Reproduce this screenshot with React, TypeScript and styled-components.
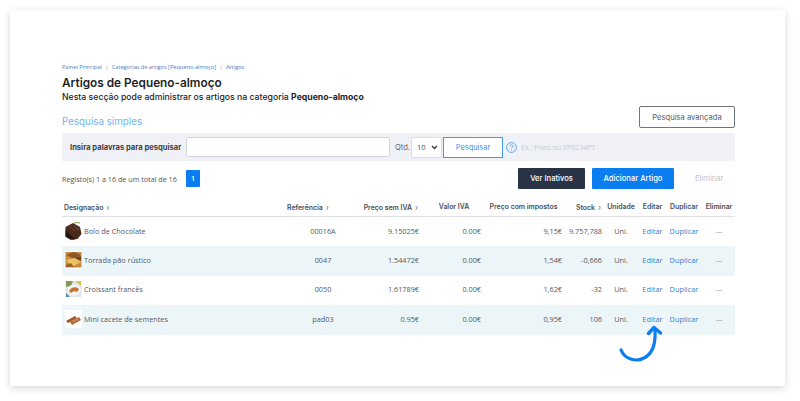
import React from "react";
import styled, { createGlobalStyle } from "styled-components";

const Global = createGlobalStyle`
  html, body { margin: 0; padding: 0; background: #fff; }
  body { width: 800px; height: 401px; overflow: hidden; font-family: "Open Sans", "Liberation Sans", sans-serif; }
  * { box-sizing: border-box; }
`;

const Page = styled.div`
  width: 800px;
  height: 401px;
  padding: 10px 15px 15px 10px;
`;
const Card = styled.main`
  position: relative;
  height: 376px;
  background: #fff;
  box-shadow: 0 2px 7px rgba(60, 64, 100, 0.22);
  padding: 52px 50px 0 52px;
`;
const Crumbs = styled.nav`
  display: flex;
  align-items: center;
  gap: 3.5px;
  height: 9px;
  font-size: 5.7px;
  color: #4a80c0;
  letter-spacing: -0.05px;
  white-space: nowrap;
  span { color: #9aa3b0; }
`;
const Title = styled.h1`
  margin: 5px 0 0;
  font: 600 11.8px/15px Inter, "Open Sans", sans-serif;
  color: #1d1f24;
`;
const Subtitle = styled.p`
  margin: 0;
  font: 500 8.7px/12px Inter, "Open Sans", sans-serif;
  color: #23252a;
  white-space: nowrap;
  b { font-weight: 700; }
`;
const SearchHead = styled.div`
  display: flex;
  justify-content: space-between;
  align-items: flex-end;
  margin-top: 3px;
`;
const SearchTitle = styled.h2`
  margin: 0;
  padding-top: 2px;
  font: 400 9.8px/13px Inter, "Open Sans", sans-serif;
  color: #74b3f3;
`;
const OutlineButton = styled.button`
  width: 96px;
  height: 22px;
  background: #fff;
  border: 1px solid #6f7680;
  border-radius: 2px;
  font: 400 7.6px Inter, sans-serif;
  color: #555b66;
  padding: 0;
`;
const SearchBar = styled.form`
  display: flex;
  align-items: center;
  height: 28px;
  margin-top: 5px;
  padding-left: 8px;
  background: #f0f1f7;
`;
const SearchLabel = styled.label`
  width: 116px;
  font: 700 7.6px Inter, sans-serif;
  color: #3c3f47;
  white-space: nowrap;
`;
const TextInput = styled.div`
  width: 204px;
  height: 20px;
  background: #fff;
  border: 1px solid #d5d7dc;
  border-radius: 2px;
`;
const Qty = styled.span`
  margin-left: 5px;
  width: 16px;
  font: 400 7.6px Inter, sans-serif;
  color: #666;
`;
const SelectBox = styled.div`
  display: flex;
  align-items: center;
  justify-content: space-between;
  width: 31px;
  height: 21px;
  padding: 0 3px 0 5px;
  background: #fff;
  border: 1px solid #dcdde2;
  border-radius: 2px;
  font-size: 7.5px;
  color: #555;
`;
const SearchButton = styled.button`
  width: 60px;
  height: 21px;
  margin-left: 1px;
  padding: 0;
  background: #fff;
  border: 1px solid #3d9bf5;
  font: 400 7.4px Inter, sans-serif;
  color: #3d8ff0;
`;
const Hint = styled.span`
  display: flex;
  align-items: center;
  gap: 4px;
  margin-left: 3px;
  font-size: 7px;
  color: #c6c9d0;
`;
const Actions = styled.div`
  display: flex;
  align-items: center;
  height: 21px;
  margin-top: 7px;
`;
const Records = styled.span`
  width: 124px;
  font-size: 7.2px;
  color: #555;
  white-space: nowrap;
`;
const PageNumber = styled.span`
  display: flex;
  align-items: center;
  justify-content: center;
  width: 14px;
  height: 17px;
  background: #0a7df0;
  border-radius: 1px;
  color: #fff;
  font-size: 7px;
  font-weight: 600;
`;
const Filled = styled.button<{ $bg: string; $w: number; $ml: number }>`
  width: ${(p) => p.$w}px;
  height: 21px;
  margin-left: ${(p) => p.$ml}px;
  padding: 0;
  background: ${(p) => p.$bg};
  border: 0;
  border-radius: 1px;
  font: 500 7.6px Inter, sans-serif;
  color: #fff;
`;
const Ghost = styled.span`
  margin-left: 21px;
  font: 400 7.6px Inter, sans-serif;
  color: #c0c4cc;
`;

const COLS = "220px 63px 78px 62px 81px 40px 30px 33px 30px 36px";
const Table = styled.section`
  margin-top: 10px;
`;
const HeaderRow = styled.div`
  display: grid;
  grid-template-columns: ${COLS};
  align-items: center;
  height: 18px;
  padding-bottom: 2px;
  border-bottom: 1px solid #dfe0e3;
  font: 600 6.9px Inter, sans-serif;
  color: #4a4e57;
  white-space: nowrap;
`;
const Chevron = styled.span`
  margin-left: 3px;
  font-weight: 400;
  font-size: 8px;
  color: #6a6e76;
`;
const Row = styled.div<{ $alt: boolean }>`
  display: grid;
  grid-template-columns: ${COLS};
  align-items: center;
  height: 29.4px;
  padding-bottom: 2px;
  background: ${(p) => (p.$alt ? "#ecf5f8" : "#fff")};
  font-size: 7.3px;
  color: #565a62;
  white-space: nowrap;
`;
const Cell = styled.div<{ $align?: string; $pr?: number; $pl?: number }>`
  text-align: ${(p) => p.$align || "left"};
  padding-right: ${(p) => p.$pr || 0}px;
  padding-left: ${(p) => p.$pl || 0}px;
`;
const Product = styled.div`
  display: flex;
  align-items: center;
  gap: 2px;
  padding-left: 3px;
`;
const Thumb = styled.svg`
  width: 17px;
  height: 18px;
  flex: none;
`;
const LinkText = styled.a`
  color: #3b7fc9;
  font-size: 7.4px;
`;
const Dash = styled.span`
  font-size: 7px;
  letter-spacing: -0.3px;
  color: #8a8e96;
`;
const ArrowSvg = styled.svg`
  position: absolute;
  left: 605px;
  top: 312px;
  width: 50px;
  height: 44px;
`;

function Food({ kind }: { kind: number }) {
  if (kind === 0)
    return (
      <Thumb viewBox="0 0 17 18">
        <path d="M9 .8h6" stroke="#7fa84a" strokeWidth="1" />
        <path d="M0.5 5L8 1l7 4 1.500 7-4 5-6 0.500-6-3z" fill="#4a2a1c" />
        <path d="M0.500 8l10 9.500-5 0.200-5-3z" fill="#2c1610" />
        <path d="M4 4l6 5M8 3l5 5M11 5l3 3" stroke="#6f4433" strokeWidth="1" />
      </Thumb>
    );
  if (kind === 1)
    return (
      <Thumb viewBox="0 0 17 18">
        <rect width="17" height="18" fill="#fff" />
        <rect x="0.5" y="1" width="16" height="15.500" fill="#c98a3a" />
        <path d="M1 4l8-3 7 3-6 4z" fill="#8a5a2a" />
        <path d="M1 9l9-2 6 4-9 5z" fill="#ebc268" />
        <path d="M1 14l5-2 3 4H1z" fill="#a0622a" />
        <path d="M10 7l6-2v5z" fill="#6d4420" />
      </Thumb>
    );
  if (kind === 2)
    return (
      <Thumb viewBox="0 0 17 18">
        <rect x="0.5" y="1" width="16" height="16" fill="#dfe6e8" />
        <path d="M1 1h7l-2 5-5 1z" fill="#7f9a5a" />
        <path d="M10 1h6v5z" fill="#e2c04a" />
        <ellipse cx="9" cy="10" rx="6.500" ry="5.500" fill="#f5f5f2" />
        <path d="M4 11c2-4 7-5 10-2l-2 3-3-1-3 2z" fill="#c4722e" />
        <path d="M1 13l4 4H1z" fill="#5a86a8" />
      </Thumb>
    );
  return (
    <Thumb viewBox="0 0 17 18">
      <rect width="17" height="18" fill="#fff" />
      <path d="M1 11l9-5 2 2-9 5z" fill="#a0552a" />
      <path d="M5 12l9-5 2 3-9 5z" fill="#b5652f" />
      <path d="M8 12l3-2M11 10l2-1" stroke="#e0b080" strokeWidth="0.8" />
    </Thumb>
  );
}

const rows = [
  ["Bolo de Chocolate", "00016A", "9.15025€", "0.00€", "9,15€", "9.757,788"],
  ["Torrada pão rústico", "0047", "1.54472€", "0.00€", "1,54€", "-0,666"],
  ["Croissant francês", "0050", "1.61789€", "0.00€", "1,62€", "-32"],
  ["Mini cacete de sementes", "pad03", "0.95€", "0.00€", "0,95€", "106"],
];

export default function App() {
  return (
    <Page>
      <Global />
      <Card>
        <Crumbs>
          Painel Principal <span>|</span> Categorias de artigos [Pequeno-almoço] <span>|</span> Artigos
        </Crumbs>
        <Title>Artigos de Pequeno-almoço</Title>
        <Subtitle>
          Nesta secção pode administrar os artigos na categoria <b>Pequeno-almoço</b>
        </Subtitle>
        <SearchHead>
          <SearchTitle>Pesquisa simples</SearchTitle>
          <OutlineButton>Pesquisa avançada</OutlineButton>
        </SearchHead>
        <SearchBar>
          <SearchLabel>Insira palavras para pesquisar</SearchLabel>
          <TextInput />
          <Qty>Qtd.</Qty>
          <SelectBox>
            10
            <svg width="7" height="5" viewBox="0 0 7 5">
              <path d="M1 1l2.500 2.500L6 1" fill="none" stroke="#333" strokeWidth="1.3" />
            </svg>
          </SelectBox>
          <SearchButton type="button">Pesquisar</SearchButton>
          <Hint>
            <svg width="11" height="11" viewBox="0 0 11 11">
              <circle cx="5.500" cy="5.500" r="4.900" fill="none" stroke="#4e9cf0" strokeWidth="0.9" />
              <path d="M4 4.300c0-2 3-2 3 0 0 1-1.500 1-1.500 2.200" fill="none" stroke="#4e9cf0" strokeWidth="0.9" />
              <circle cx="5.500" cy="8" r="0.550" fill="#4e9cf0" />
            </svg>
            Ex.: Pneu ou XP0234PT
          </Hint>
        </SearchBar>
        <Actions>
          <Records>Registo(s) 1 a 16 de um total de 16</Records>
          <PageNumber>1</PageNumber>
          <Filled $bg="#2a3447" $w={67} $ml={318}>Ver Inativos</Filled>
          <Filled $bg="#0a7df0" $w={82} $ml={7}>Adicionar Artigo</Filled>
          <Ghost>Eliminar</Ghost>
        </Actions>
        <Table>
          <HeaderRow>
            <Cell $pl={2}>Designação<Chevron>›</Chevron></Cell>
            <Cell $pl={5}>Referência<Chevron>›</Chevron></Cell>
            <Cell $align="right" $pr={5}>Preço sem IVA<Chevron>›</Chevron></Cell>
            <Cell $align="center">Valor IVA</Cell>
            <Cell $align="center" $pr={4}>Preço com impostos</Cell>
            <Cell $align="right" $pr={5}>Stock<Chevron>›</Chevron></Cell>
            <Cell $align="center">Unidade</Cell>
            <Cell $align="center">Editar</Cell>
            <Cell $align="center">Duplicar</Cell>
            <Cell $align="center" $pl={4}>Eliminar</Cell>
          </HeaderRow>
          {rows.map((r, i) => (
            <Row key={r[0]} $alt={i % 2 === 1}>
              <Product>
                <Food kind={i} />
                {r[0]}
              </Product>
              <Cell $align="center" $pl={19}>{r[1]}</Cell>
              <Cell $align="right" $pr={4}>{r[2]}</Cell>
              <Cell $align="right" $pr={4}>{r[3]}</Cell>
              <Cell $align="right" $pr={4}>{r[4]}</Cell>
              <Cell $align="right" $pr={4}>{r[5]}</Cell>
              <Cell $align="center">Uni.</Cell>
              <Cell $align="center"><LinkText>Editar</LinkText></Cell>
              <Cell $align="center"><LinkText>Duplicar</LinkText></Cell>
              <Cell $align="center" $pl={4}><Dash>---</Dash></Cell>
            </Row>
          ))}
        </Table>
        <ArrowSvg viewBox="0 0 50 44">
          <path
            d="M6 28C10 38 22 40 29 36 37 32 41 24 40 8"
            fill="none"
            stroke="#0a7df0"
            strokeWidth="3.2"
            strokeLinecap="round"
          />
          <path
            d="M33.500 11.500L39 5.500 45.500 11"
            fill="none"
            stroke="#0a7df0"
            strokeWidth="3.4"
            strokeLinecap="round"
            strokeLinejoin="round"
          />
        </ArrowSvg>
      </Card>
    </Page>
  );
}
